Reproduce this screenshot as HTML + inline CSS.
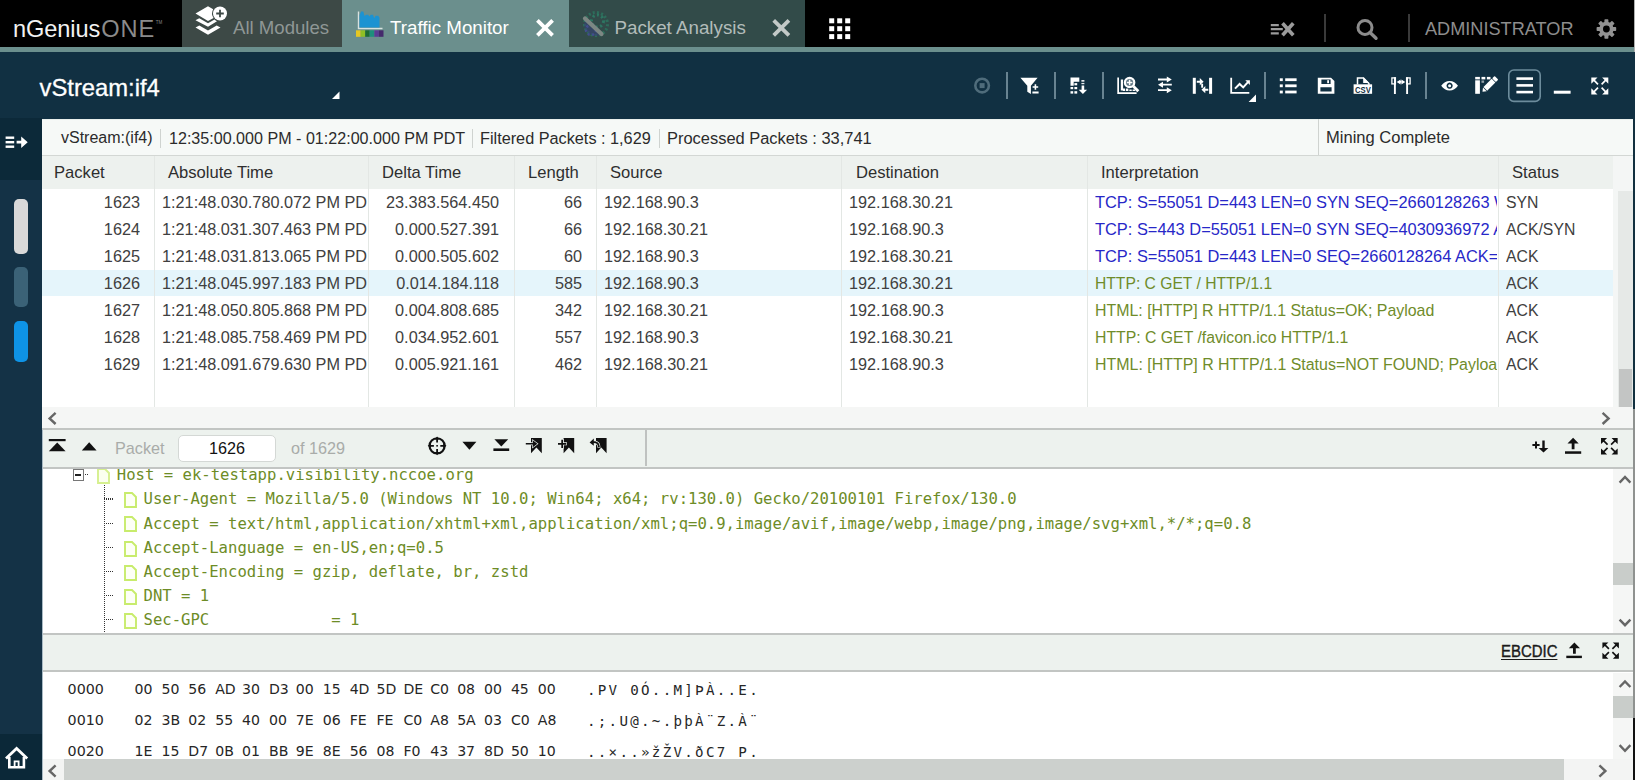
<!DOCTYPE html>
<html lang="en"><head><meta charset="utf-8"><title>nGeniusONE - Traffic Monitor</title>
<style>
*{box-sizing:border-box;margin:0;padding:0}
html,body{width:1635px;height:780px;overflow:hidden;background:#fff}
body{position:relative;font-family:"Liberation Sans",sans-serif;color:#333;font-size:16px}
div,span,i,svg,b{position:absolute;display:block}
i{font-style:normal}
#top{left:0;top:0;width:1635px;height:47px;background:#000}
#strip{left:0;top:47px;width:1635px;height:5px;background:#6b8f8d}
#bar{left:0;top:52px;width:1635px;height:67.400px;background:#113042}
#side{left:0;top:118px;width:42px;height:662px;background:#143246}
#sidetop{left:0;top:0;width:42px;height:62px;background:#0c2939}
#sidebot{left:0;top:616.400px;width:42px;height:46px;background:#0b2838}
.pill{left:14px;width:14px;border-radius:5px}
#redge{left:1633px;top:118px;width:2px;height:662px;background:#12303f}
.logo{left:13px;top:14.300px;font-size:23.6px;line-height:30px;color:#f2f2f2;white-space:nowrap;letter-spacing:-0.1px}
.logo span{position:static;display:inline;color:#8b8b8b;letter-spacing:1px;margin-left:1px}
.logo sup{font-size:4.500px;color:#888;vertical-align:top;position:relative;top:-6.500px;left:0.500px;letter-spacing:0}
.tab{top:0;height:47px}
.tab .lbl{top:15.200px;font-size:18.6px;line-height:26px;white-space:nowrap}
#t1{left:182px;width:160px;background:#3d4946}
#t2{left:342px;width:227px;background:#6b8f8d}
#t3{left:569px;width:236px;background:#324b49}
.adm{left:1425px;top:15.500px;font-size:18.150px;line-height:26px;color:#8d8d8d;white-space:nowrap}
.tsep{top:14px;width:2px;height:28px;background:#3a3a3a}
.title{left:39.500px;top:19.800px;font-size:23.8px;line-height:32px;color:#fff;white-space:nowrap;-webkit-text-stroke:0.3px #fff}
.bsep{top:20px;width:2px;height:27px;background:#688391}
.ico{overflow:visible}
#info{left:42px;top:119.400px;width:1591px;height:36.600px;background:#f6f9f7;border-bottom:1px solid #d3d7d4;border-top:1px solid #e9efec}
#info span{top:-1.400px;line-height:38px;font-size:16px;color:#2b2b2b;white-space:nowrap}
#info i{top:8.500px;width:1px;height:19px;background:#cfd3d0}
#tbl{left:42px;top:118px;width:1591px;height:289px;overflow:hidden}
.thead{left:0;top:38px;width:1571px;height:33px;background:#edf1ee}
.th{top:0;line-height:33px;font-size:16.6px;color:#2e2e2e;white-space:nowrap}
.tr{left:0;width:1571px;height:27px}
.tr.sel{background:#e5f5fb;height:26px}
.td{top:0;height:27px;line-height:27px;font-size:16.250px;color:#404040;white-space:nowrap;overflow:hidden}
.td.r{text-align:right}
.td.b{color:#2727c8}
.td.g{color:#6f8c2a}
.vsep{top:38px;width:1px;height:251px;background:#e3e7e4}
#ptb{left:42px;top:428px;width:1591px;height:40.500px;background:#edf2ee;border-top:2px solid #c2c5c3;border-bottom:2px solid #c2c5c3}
#tree{left:42px;top:468px;width:1591px;height:165px;overflow:hidden;background:#fff}
.tn{font-family:"DejaVu Sans Mono","Liberation Mono",monospace;font-size:15.6px;line-height:20px;height:20px;color:#6d8c26;white-space:nowrap}
.doc{overflow:visible}
.hdot{width:10px;height:1.300px;background:repeating-linear-gradient(90deg,#333 0 1px,transparent 1px 2px)}
.vdot{left:62px;top:17px;width:1.300px;height:150px;background:repeating-linear-gradient(180deg,#333 0 1px,transparent 1px 2px)}
.exp{left:30.500px;top:1.200px;width:11.500px;height:11.500px;border:1.200px solid #777;background:#fff}
.exp:after{content:"";position:absolute;left:1.500px;top:3.800px;width:6px;height:1.600px;background:#222}
#htb{left:42px;top:633px;width:1591px;height:39px;background:#edf2ee;border-top:2px solid #c2c5c3;border-bottom:2px solid #c2c5c3}
#hex{left:42px;top:672px;width:1591px;height:88px;overflow:hidden;background:#fff}
.hx{left:0;height:20px;width:1500px;font-family:"DejaVu Sans Mono","Liberation Mono",monospace;color:#262626;white-space:nowrap}
.hx span{top:0;line-height:20px}
.ho{left:25.600px;font-size:14.250px;font-family:"DejaVu Sans","Liberation Sans",sans-serif}
.hh{left:92.600px;font-size:14.100px;font-family:"DejaVu Sans","Liberation Sans",sans-serif;width:440px;height:20px}
.hh b{top:0;font-weight:normal;line-height:20px}
.ha{left:545px;top:0.600px !important;font-size:14.2px;letter-spacing:2.27px}
.sb{background:#f0f1f0}
.thumb{background:#c9cdca}

</style></head><body>
<div id="top">
  <div class="logo">nGenius<span>ONE</span><sup>TM</sup></div>
  <div class="tab" id="t1"><span class="lbl" style="left:51px;color:#8f9795">All Modules</span></div>
  <div class="tab" id="t2"><span class="lbl" style="left:48px;color:#fff;font-size:18.750px">Traffic Monitor</span></div>
  <div class="tab" id="t3"><span class="lbl" style="left:45.500px;color:#b3bcba;font-size:18.75px">Packet Analysis</span></div>
  <i class="tsep" style="left:1324px"></i><i class="tsep" style="left:1408px"></i>
  <div class="adm">ADMINISTRATOR</div>
</div>
<div id="strip"></div>
<div id="bar">
  <div class="title">vStream:if4</div>
  <i class="bsep" style="left:1006px"></i><i class="bsep" style="left:1054px"></i><i class="bsep" style="left:1102px"></i><i class="bsep" style="left:1264px"></i><i class="bsep" style="left:1425px"></i>
</div>
<div id="side">
  <div id="sidetop"></div>
  <i class="pill" style="top:81px;height:55px;background:#d9d9d9"></i>
  <i class="pill" style="top:149px;height:40px;background:#3b6277"></i>
  <i class="pill" style="top:202.500px;height:41px;background:#0e93e6"></i>
  <div id="sidebot"></div>
</div>
<div id="info">
  <span style="left:19px">vStream:(if4)</span><i style="left:118px"></i>
  <span style="left:127px;font-size:16.1px">12:35:00.000 PM - 01:22:00.000 PM PDT</span><i style="left:430px"></i>
  <span style="left:438px;font-size:16.25px">Filtered Packets : 1,629</span><i style="left:617px"></i>
  <span style="left:625px;font-size:16.45px">Processed Packets : 33,741</span><i style="left:1276px;top:-1px;height:36px"></i>
  <span style="left:1284px;font-size:16.55px">Mining Complete</span>
</div>
<div id="tbl">
<div class="thead"><span class="th" style="left:12px">Packet</span><span class="th" style="left:126px">Absolute Time</span><span class="th" style="left:340px">Delta Time</span><span class="th" style="left:486px">Length</span><span class="th" style="left:568px">Source</span><span class="th" style="left:814px">Destination</span><span class="th" style="left:1059px">Interpretation</span><span class="th" style="left:1470px">Status</span></div>
<div class="tr" style="top:71px"><span class="td r" style="left:0px;width:98px">1623</span><span class="td" style="left:120px;width:205px">1:21:48.030.780.072 PM PD</span><span class="td r" style="left:326px;width:131px">23.383.564.450</span><span class="td r" style="left:472px;width:68px">66</span><span class="td" style="left:562px;width:236px">192.168.90.3</span><span class="td" style="left:807px;width:237px">192.168.30.21</span><span class="td b" style="left:1053px;width:402px;font-size:16.4px">TCP: S=55051 D=443 LEN=0 SYN SEQ=2660128263 WIN=64240</span><span class="td" style="left:1464px;width:105px;font-size:15.8px">SYN</span></div>
<div class="tr" style="top:98px"><span class="td r" style="left:0px;width:98px">1624</span><span class="td" style="left:120px;width:205px">1:21:48.031.307.463 PM PD</span><span class="td r" style="left:326px;width:131px">0.000.527.391</span><span class="td r" style="left:472px;width:68px">66</span><span class="td" style="left:562px;width:236px">192.168.30.21</span><span class="td" style="left:807px;width:237px">192.168.90.3</span><span class="td b" style="left:1053px;width:402px;font-size:16.4px">TCP: S=443 D=55051 LEN=0 SYN SEQ=4030936972 ACK=2660128264</span><span class="td" style="left:1464px;width:105px;font-size:15.8px">ACK/SYN</span></div>
<div class="tr" style="top:125px"><span class="td r" style="left:0px;width:98px">1625</span><span class="td" style="left:120px;width:205px">1:21:48.031.813.065 PM PD</span><span class="td r" style="left:326px;width:131px">0.000.505.602</span><span class="td r" style="left:472px;width:68px">60</span><span class="td" style="left:562px;width:236px">192.168.90.3</span><span class="td" style="left:807px;width:237px">192.168.30.21</span><span class="td b" style="left:1053px;width:402px;font-size:16.4px">TCP: S=55051 D=443 LEN=0 SEQ=2660128264 ACK=4030936973</span><span class="td" style="left:1464px;width:105px;font-size:15.8px">ACK</span></div>
<div class="tr sel" style="top:152px"><span class="td r" style="left:0px;width:98px">1626</span><span class="td" style="left:120px;width:205px">1:21:48.045.997.183 PM PD</span><span class="td r" style="left:326px;width:131px">0.014.184.118</span><span class="td r" style="left:472px;width:68px">585</span><span class="td" style="left:562px;width:236px">192.168.90.3</span><span class="td" style="left:807px;width:237px">192.168.30.21</span><span class="td g" style="left:1053px;width:402px;font-size:15.67px">HTTP: C GET / HTTP/1.1</span><span class="td" style="left:1464px;width:105px;font-size:15.8px">ACK</span></div>
<div class="tr" style="top:179px"><span class="td r" style="left:0px;width:98px">1627</span><span class="td" style="left:120px;width:205px">1:21:48.050.805.868 PM PD</span><span class="td r" style="left:326px;width:131px">0.004.808.685</span><span class="td r" style="left:472px;width:68px">342</span><span class="td" style="left:562px;width:236px">192.168.30.21</span><span class="td" style="left:807px;width:237px">192.168.90.3</span><span class="td g" style="left:1053px;width:402px;font-size:15.93px">HTML: [HTTP] R HTTP/1.1 Status=OK; Payload</span><span class="td" style="left:1464px;width:105px;font-size:15.8px">ACK</span></div>
<div class="tr" style="top:206px"><span class="td r" style="left:0px;width:98px">1628</span><span class="td" style="left:120px;width:205px">1:21:48.085.758.469 PM PD</span><span class="td r" style="left:326px;width:131px">0.034.952.601</span><span class="td r" style="left:472px;width:68px">557</span><span class="td" style="left:562px;width:236px">192.168.90.3</span><span class="td" style="left:807px;width:237px">192.168.30.21</span><span class="td g" style="left:1053px;width:402px;font-size:15.8px">HTTP: C GET /favicon.ico HTTP/1.1</span><span class="td" style="left:1464px;width:105px;font-size:15.8px">ACK</span></div>
<div class="tr" style="top:233px"><span class="td r" style="left:0px;width:98px">1629</span><span class="td" style="left:120px;width:205px">1:21:48.091.679.630 PM PD</span><span class="td r" style="left:326px;width:131px">0.005.921.161</span><span class="td r" style="left:472px;width:68px">462</span><span class="td" style="left:562px;width:236px">192.168.30.21</span><span class="td" style="left:807px;width:237px">192.168.90.3</span><span class="td g" style="left:1053px;width:402px;font-size:15.95px">HTML: [HTTP] R HTTP/1.1 Status=NOT FOUND; Payload</span><span class="td" style="left:1464px;width:105px;font-size:15.8px">ACK</span></div>
<i class="vsep" style="left:112px"></i><i class="vsep" style="left:326px"></i><i class="vsep" style="left:472px"></i><i class="vsep" style="left:554px"></i><i class="vsep" style="left:799px"></i><i class="vsep" style="left:1045px"></i><i class="vsep" style="left:1456px"></i>
</div>
<div id="tree">
<div class="tn" style="top:-2.7px;left:74.8px">Host = ek-testapp.visibility.nccoe.org</div>
<svg class="doc" style="top:0.0px;left:55px" width="13" height="16" viewBox="0 0 13 16"><path d="M1 1h7l4 4v10H1z" fill="#fbffef" stroke="#d6f08e" stroke-width="1.9"/></svg>
<div class="tn" style="top:21.4px;left:101.5px">User-Agent = Mozilla/5.0 (Windows NT 10.0; Win64; x64; rv:130.0) Gecko/20100101 Firefox/130.0</div>
<svg class="doc" style="top:24.1px;left:82px" width="13" height="16" viewBox="0 0 13 16"><path d="M1 1h7l4 4v10H1z" fill="#fdfff6" stroke="#c8ec6c" stroke-width="1.9"/></svg>
<i class="hdot" style="top:30.4px;left:62px"></i>
<div class="tn" style="top:45.6px;left:101.5px">Accept = text/html,application/xhtml+xml,application/xml;q=0.9,image/avif,image/webp,image/png,image/svg+xml,*/*;q=0.8</div>
<svg class="doc" style="top:48.3px;left:82px" width="13" height="16" viewBox="0 0 13 16"><path d="M1 1h7l4 4v10H1z" fill="#fdfff6" stroke="#c8ec6c" stroke-width="1.9"/></svg>
<i class="hdot" style="top:54.6px;left:62px"></i>
<div class="tn" style="top:69.8px;left:101.5px">Accept-Language = en-US,en;q=0.5</div>
<svg class="doc" style="top:72.5px;left:82px" width="13" height="16" viewBox="0 0 13 16"><path d="M1 1h7l4 4v10H1z" fill="#fdfff6" stroke="#c8ec6c" stroke-width="1.9"/></svg>
<i class="hdot" style="top:78.8px;left:62px"></i>
<div class="tn" style="top:93.9px;left:101.5px">Accept-Encoding = gzip, deflate, br, zstd</div>
<svg class="doc" style="top:96.6px;left:82px" width="13" height="16" viewBox="0 0 13 16"><path d="M1 1h7l4 4v10H1z" fill="#fdfff6" stroke="#c8ec6c" stroke-width="1.9"/></svg>
<i class="hdot" style="top:102.9px;left:62px"></i>
<div class="tn" style="top:118.0px;left:101.5px">DNT = 1</div>
<svg class="doc" style="top:120.7px;left:82px" width="13" height="16" viewBox="0 0 13 16"><path d="M1 1h7l4 4v10H1z" fill="#fdfff6" stroke="#c8ec6c" stroke-width="1.9"/></svg>
<i class="hdot" style="top:127.0px;left:62px"></i>
<div class="tn" style="top:142.2px;left:101.5px">Sec-GPC             = 1</div>
<svg class="doc" style="top:144.9px;left:82px" width="13" height="16" viewBox="0 0 13 16"><path d="M1 1h7l4 4v10H1z" fill="#fdfff6" stroke="#c8ec6c" stroke-width="1.9"/></svg>
<i class="hdot" style="top:151.2px;left:62px"></i>
<i class="vdot"></i>
<span class="exp"></span><i class="hdot" style="top:6px;left:43px;width:4px"></i>
</div>
<div id="hex">
<div class="hx" style="top:7.2px"><span class="ho">0000</span><span class="hh"><b style="left:0.00px">00</b><b style="left:26.88px">50</b><b style="left:53.76px">56</b><b style="left:80.64px">AD</b><b style="left:107.52px">30</b><b style="left:134.40px">D3</b><b style="left:161.28px">00</b><b style="left:188.16px">15</b><b style="left:215.04px">4D</b><b style="left:241.92px">5D</b><b style="left:268.80px">DE</b><b style="left:295.68px">C0</b><b style="left:322.56px">08</b><b style="left:349.44px">00</b><b style="left:376.32px">45</b><b style="left:403.20px">00</b></span><span class="ha">.PV 0Ó..M]ÞÀ..E.</span></div>
<div class="hx" style="top:38.2px"><span class="ho">0010</span><span class="hh"><b style="left:0.00px">02</b><b style="left:26.88px">3B</b><b style="left:53.76px">02</b><b style="left:80.64px">55</b><b style="left:107.52px">40</b><b style="left:134.40px">00</b><b style="left:161.28px">7E</b><b style="left:188.16px">06</b><b style="left:215.04px">FE</b><b style="left:241.92px">FE</b><b style="left:268.80px">C0</b><b style="left:295.68px">A8</b><b style="left:322.56px">5A</b><b style="left:349.44px">03</b><b style="left:376.32px">C0</b><b style="left:403.20px">A8</b></span><span class="ha">.;.U@.~.þþÀ¨Z.À¨</span></div>
<div class="hx" style="top:69.2px"><span class="ho">0020</span><span class="hh"><b style="left:0.00px">1E</b><b style="left:26.88px">15</b><b style="left:53.76px">D7</b><b style="left:80.64px">0B</b><b style="left:107.52px">01</b><b style="left:134.40px">BB</b><b style="left:161.28px">9E</b><b style="left:188.16px">8E</b><b style="left:215.04px">56</b><b style="left:241.92px">08</b><b style="left:268.80px">F0</b><b style="left:295.68px">43</b><b style="left:322.56px">37</b><b style="left:349.44px">8D</b><b style="left:376.32px">50</b><b style="left:403.20px">10</b></span><span class="ha">..×..»žŽV.ðC7 P.</span></div>
</div>
<!-- scrollbars -->
<div class="sb" style="left:1613px;top:156px;width:20px;height:251px;background:#f4f6f5"></div>
<div class="sb" style="left:1618px;top:191px;width:15px;height:216px;background:#e6e9e7"></div>
<div class="thumb" style="left:1619px;top:369px;width:13px;height:38px;background:#c3c5c4"></div>
<div class="sb" style="left:42px;top:407px;width:1591px;height:21px;background:#f5f6f5"></div>
<div id="ptb">
  <span style="left:73px;top:0;line-height:36px;font-size:16.2px;color:#a9aca9">Packet</span>
  <div style="left:136px;top:4.500px;width:98px;height:27px;background:#fff;border:1px solid #d4d8d5;border-radius:5px"></div>
  <span style="left:136px;top:0;width:98px;text-align:center;line-height:37px;font-size:16.2px;color:#111;">1626</span>
  <span style="left:249px;top:0;line-height:36px;font-size:16.2px;color:#a9aca9">of 1629</span>
  <i style="left:603px;top:0;width:2px;height:36px;background:#bfc2c0"></i>
</div>
<div class="sb" style="left:1613px;top:469px;width:20px;height:164px;background:#f5f6f5"></div>
<div class="thumb" style="left:1613px;top:563px;width:20px;height:22px"></div>
<div id="htb">
  <span style="left:1458.500px;top:-1px;line-height:35px;font-size:16.6px;color:#1a1a1a;text-decoration:underline;text-underline-offset:1.500px;text-decoration-thickness:1.300px;-webkit-text-stroke:0.4px #1a1a1a;transform:scaleX(0.9);transform-origin:0 0">EBCDIC</span>
</div>
<div class="sb" style="left:1613px;top:673px;width:20px;height:87px;background:#f5f6f5"></div>
<div class="thumb" style="left:1613px;top:696px;width:20px;height:22px"></div>
<div class="sb" style="left:42px;top:759px;width:1591px;height:21px;background:#f3f4f3"></div>
<div class="thumb" style="left:64px;top:759px;width:1500px;height:21px;background:#ccd0cd"></div>
<div id="redge"></div>
<div style="left:1633px;top:409px;width:2px;height:310px;background:#8f9290"></div>
<div style="left:1633px;top:718px;width:2px;height:62px;background:#111"></div>
<div style="left:42px;top:430px;width:1px;height:350px;background:#a9bac4"></div>
<div style="left:1633.500px;top:0;width:1.500px;height:52px;background:#aeb0af"></div>
<svg id="ov" style="left:0;top:0" width="1635" height="780" viewBox="0 0 1635 780">
<!-- ===== top bar icons ===== -->
<g fill="#fff">
  <!-- layers + plus (All Modules) -->
  <path d="M195.5 13.5 L208 6.3 L213.2 9.3 A8 8 0 0 0 213.6 18 L208 21 Z"/>
  <path d="M195.5 20.3 L199.3 18.2 L208 23.2 L214.5 19.5 A8 8 0 0 0 217 21.2 L208 26.8 Z" />
  <path d="M195.5 27.6 L199.3 25.4 L208 30.4 L216.7 25.4 L220.5 27.6 L208 34.8 Z"/>
  <circle cx="220" cy="13.5" r="7"/>
</g>
<path d="M216.2 13.5h7.6M220 9.7v7.6" stroke="#3d4946" stroke-width="1.8" fill="none"/>
<!-- traffic monitor icon -->
<path d="M358.5 11.5V28.5H382.5" stroke="#d8e2e0" stroke-width="1.4" fill="none"/>
<path d="M359.6 27.6V15l1.5-3.5h2.2l1.2 4.5 1.6-1.2h2.2l1 1.7 1.5-1.7h2.2l1.2 3.5 1.4-2.5h2.6l1.3 2v9.8z" fill="#1c93d2"/>
<g>
 <rect x="356" y="30.3" width="4.7" height="6.5" fill="#e6c722"/>
 <rect x="360.7" y="30.3" width="4.5" height="6.5" fill="#8fbf25"/>
 <rect x="365.2" y="30.3" width="4.5" height="6.5" fill="#1d6b33"/>
 <rect x="369.7" y="30.3" width="4.6" height="6.5" fill="#1d8f7c"/>
 <rect x="374.3" y="30.3" width="4.6" height="6.5" fill="#5a3c93"/>
 <rect x="378.9" y="30.3" width="4.6" height="6.5" fill="#452a6c"/>
</g>
<!-- close X (active) -->
<path d="M537.400 20.300L552.600 35.300M552.600 20.300L537.400 35.300" stroke="#fff" stroke-width="3.800" fill="none"/>
<!-- packet analysis icon -->
<g opacity="0.55">
 <circle cx="596" cy="24" r="11.5" fill="none" stroke="#2a8a6a" stroke-width="3" stroke-dasharray="2 2.2" transform="rotate(-20 596 24)"/>
 <circle cx="597.5" cy="21" r="6" fill="none" stroke="#2a9a78" stroke-width="3" stroke-dasharray="2 2.5"/>
 <path d="M584 24a12 12 0 0 0 16 11.300L586 19z" fill="#3a3a9a" opacity="0.600"/>
 <circle cx="591" cy="30" r="5" fill="none" stroke="#5050c8" stroke-width="2.5" stroke-dasharray="2 2.5"/>
 <path d="M585 18.5L601.5 34" stroke="#b9b9b4" stroke-width="4.2" stroke-linecap="round"/>
</g>
<!-- close X (inactive) -->
<path d="M773.700 20.300L788.900 35.300M788.900 20.300L773.700 35.300" stroke="#c3c9c7" stroke-width="3.800" fill="none"/>
<!-- grid 3x3 -->
<g fill="#fff">
 <rect x="829.2" y="18.3" width="5" height="5"/><rect x="837.2" y="18.3" width="5" height="5"/><rect x="845.2" y="18.3" width="5" height="5"/>
 <rect x="829.2" y="26.2" width="5" height="5"/><rect x="837.2" y="26.2" width="5" height="5"/><rect x="845.2" y="26.2" width="5" height="5"/>
 <rect x="829.2" y="34.1" width="5" height="5"/><rect x="837.2" y="34.1" width="5" height="5"/><rect x="845.2" y="34.1" width="5" height="5"/>
</g>
<!-- =x -->
<g stroke="#9b9b9b" fill="none">
 <path d="M1270.8 25.2h8M1270.8 29.2h12M1270.8 33.3h8" stroke-width="2.2"/>
 <path d="M1282.5 23.2L1293.3 35.3M1293.3 23.2L1282.5 35.3" stroke-width="3.6"/>
</g>
<!-- search -->
<circle cx="1365" cy="27.4" r="7" stroke="#8c8c8c" stroke-width="3" fill="none"/>
<path d="M1370 32.6L1376 38.3" stroke="#8c8c8c" stroke-width="3.4" stroke-linecap="round"/>
<!-- gear -->
<g transform="translate(1606.4 29)">
 <g fill="#929292">
  <rect x="-2" y="-9.8" width="4" height="19.6" rx="0.8"/>
  <rect x="-2" y="-9.8" width="4" height="19.6" rx="0.8" transform="rotate(45)"/>
  <rect x="-2" y="-9.8" width="4" height="19.6" rx="0.8" transform="rotate(90)"/>
  <rect x="-2" y="-9.8" width="4" height="19.6" rx="0.8" transform="rotate(135)"/>
  <circle r="7.2"/>
 </g>
 <circle r="3.4" fill="#000"/>
</g>
<!-- title dropdown triangle -->
<path d="M339.5 91.5V99H332z" fill="#fff"/>

<!-- ===== navy toolbar icons ===== -->
<!-- stop (disabled) -->
<circle cx="982.1" cy="85.6" r="6.8" stroke="#4f6c7b" stroke-width="2.6" fill="none"/>
<rect x="979.6" y="83.1" width="5" height="5" fill="#4f6c7b"/>
<g fill="#fff">
<!-- filter +- -->
 <path d="M1020.4 77.7h17.2l-6.7 8v8.2l-3.6-2.2v-6z"/>
 <path d="M1032.6 86.3h2v-2h1.6v2h2v1.5h-2v2h-1.6v-2h-2zM1032.4 91.6h6.2v1.9h-6.2z" />
<!-- sort -->
 <path d="M1070.500 77.500h8.800v4.200h-5.600v4h-3.200z"/>
 <rect x="1074.400" y="83.100" width="2.800" height="2.200"/>
 <rect x="1070.500" y="87" width="2.700" height="2.200"/><rect x="1074.400" y="87" width="2.800" height="2.200"/>
 <rect x="1070.500" y="91.200" width="2.700" height="2.400"/><rect x="1074.400" y="91.200" width="2.800" height="2.400"/>
 <rect x="1081.400" y="80" width="3" height="1.700" opacity="0.900"/><rect x="1081.400" y="82.900" width="3" height="1.300" opacity="0.900"/>
 <path d="M1081.600 85.600h2.600v4.200h2.900l-4.200 4.100l-4.200-4.100h2.900z"/>
<!-- chart search -->
 <path d="M1117.300 77.500h1.700v14.800h17.600v1.600h-19.300zM1120.800 79.400h2.300v11.200h-2.300z"/>
 <path d="M1122.8 88.6h2.4v2.4h-2.4zM1126 88.6h2.4v2.4h-2.4zM1129.3 89.4h2.4v1.6h-2.4zM1132.6 89.4h2.6v1.6h-2.6z"/>
</g>
<circle cx="1129.600" cy="82.500" r="4.700" stroke="#fff" stroke-width="2.200" fill="#5d7482"/>
<path d="M1129.600 79.700v5.600M1126.800 82.500h5.600" stroke="#fff" stroke-width="1.500"/>
<path d="M1133.300 86.300L1138.300 91.300" stroke="#fff" stroke-width="2.800"/>
<!-- three arrows -->
<g stroke="#fff" stroke-width="1.8" fill="none">
 <path d="M1158 79.500h10M1161.800 84.700h10M1158 90.200h10"/>
</g>
<g fill="#fff">
 <path d="M1166.800 76.500l5 3l-5 3zM1163 81.700l-5 3l5 3zM1166.800 87.200l5 3l-5 3z"/>
<!-- |><| -->
 <rect x="1192.8" y="77.8" width="3" height="16"/><rect x="1209.1" y="77.8" width="3" height="16"/>
 <path d="M1196.8 80.7h3v-2.6l3.8 3.6l-3.8 3.6v-2.6h-3zM1208.3 88.7h-3v-2.6l-3.8 3.6l3.8 3.6v-2.6h3z"/>
 <path d="M1201.2 83.7h1.9v4h-1.9z"/>
</g>
<!-- line chart -->
<path d="M1231.2 77.8V92.8H1249.3" stroke="#fff" stroke-width="1.8" fill="none"/>
<path d="M1235 88.6l4.6-4.6l3.6 3.4l5-5.6" stroke="#fff" stroke-width="2" fill="none"/>
<path d="M1245.3 80.3h4.6v4.6z" fill="#fff"/>
<path d="M1256 94.6V102H1248.6z" fill="#fff"/>
<!-- list -->
<g fill="#fff">
 <rect x="1279.8" y="78.3" width="3" height="2.8"/><rect x="1285.2" y="78.3" width="11.4" height="2.8"/>
 <rect x="1279.8" y="84.4" width="3" height="2.8"/><rect x="1285.2" y="84.4" width="11.4" height="2.8"/>
 <rect x="1279.8" y="90.6" width="3" height="2.8"/><rect x="1285.2" y="90.6" width="11.4" height="2.8"/>
<!-- save -->
 <path fill-rule="evenodd" d="M1317.8 77.7h13.2l3.4 3.2v12.8h-16.6zM1321.4 79.4v4.6h9.2v-4.6zM1320.4 87.2v4.2h11.2v-4.2z"/>
 <rect x="1327.2" y="80.2" width="1.8" height="3"/>
<!-- csv -->
 <path d="M1353.600 84.300h18.500v9.500h-18.500z"/>
 <path d="M1363.200 77.300l5.800 5.800h-5.800z"/>
</g>
<path d="M1357.500 84.600v-6.500h6l5.400 5.400v1.200" stroke="#fff" stroke-width="1.500" fill="none"/>
<rect x="1359.400" y="80.200" width="2.600" height="2.600" fill="#0c2433"/>
<text x="1355" y="92.700" font-family="Liberation Sans, sans-serif" font-weight="bold" font-size="9.200" fill="#12303f" textLength="15.800" lengthAdjust="spacingAndGlyphs">CSV</text>
<!-- antenna -->
<g stroke="#fff" fill="none">
 <path d="M1394.900 77.300V94M1407.100 77.300V94" stroke-width="1.900"/>
 <rect x="1391.900" y="77.900" width="3.500" height="6" stroke-width="1.300"/><rect x="1406.600" y="77.900" width="3.500" height="6" stroke-width="1.300"/>
</g>
<path d="M1396.700 81.900l3.900-2.500v5zM1405.300 81.900l-3.900-2.500v5zM1400.400 81h1.200v1.800h-1.200z" fill="#fff"/>
<!-- eye -->
<path fill-rule="evenodd" fill="#fff" d="M1441.2 85.7c2.2-3.2 5-4.8 8.4-4.8s6.2 1.6 8.4 4.8c-2.2 3.2-5 4.8-8.4 4.8s-6.200-1.6-8.400-4.800zM1449.600 82.600a3.100 3.100 0 1 0 0.010 0z"/>
<circle cx="1449.600" cy="85.700" r="1.500" fill="#fff"/>
<!-- edit table -->
<g fill="#fff">
 <rect x="1475.200" y="76.900" width="4.700" height="2.500"/><rect x="1475.200" y="80.300" width="4.700" height="13.500"/>
 <rect x="1481.500" y="76.900" width="3.800" height="2.500"/><rect x="1486.900" y="76.900" width="3.600" height="2.500"/>
 <rect x="1481.500" y="80.500" width="2.600" height="2.300" opacity="0.550"/>
 <g transform="translate(1482.500 91.700) rotate(-45)">
  <path d="M0 0L3.300-2.600V2.600z"/><rect x="4" y="-2.600" width="11.600" height="5.200"/><rect x="16.300" y="-2.600" width="3.400" height="5.200" rx="0.800"/>
 </g>
</g>
<!-- boxed hamburger -->
<rect x="1508.800" y="70" width="31.400" height="31.400" rx="5" stroke="#6d8c9c" stroke-width="1.600" fill="none"/>
<g fill="#fff">
 <rect x="1516.400" y="77.300" width="16.600" height="2.600"/><rect x="1516.400" y="84.100" width="16.600" height="2.600"/><rect x="1516.400" y="90.800" width="16.600" height="2.600"/>
 <rect x="1553.800" y="90.700" width="16.800" height="3"/>
</g>
<!-- fullscreen (white) -->
<g fill="#fff" transform="translate(1591.3 77.6)"><path d="M0.0 0.0L6.2 0.0L3.7 2.5L7.3 6.1L6.1 7.3L2.5 3.7L0.0 6.2z"/><path d="M17.0 0.0L10.8 0.0L13.3 2.5L9.7 6.1L10.9 7.3L14.5 3.7L17.0 6.2z"/><path d="M0.0 16.8L6.2 16.8L3.7 14.3L7.3 10.7L6.1 9.5L2.5 13.1L0.0 10.6z"/><path d="M17.0 16.8L10.8 16.8L13.3 14.3L9.7 10.7L10.9 9.5L14.5 13.1L17.0 10.6z"/></g>
<!-- sidebar menu arrow -->
<g fill="#fff">
 <rect x="5.600" y="136.500" width="8.600" height="2.400"/><rect x="5.600" y="141" width="8.600" height="2.400"/><rect x="5.600" y="145.500" width="8.600" height="2.400"/>
 <path d="M16.600 140.800h4.600v-4.300l6.500 5.700l-6.500 5.700v-4.300h-4.600z"/>
</g>
<!-- home -->
<path d="M6 758.500L16.600 748.500L27.200 758.500" stroke="#fff" stroke-width="2.800" fill="none" stroke-linejoin="miter"/>
<path d="M9.300 757v10.200h14.600V757" stroke="#fff" stroke-width="2.600" fill="none"/>
<path d="M14.600 767v-5.600h4v5.600" stroke="#fff" stroke-width="1.800" fill="none"/>
<!-- packet toolbar -->
<g fill="#111">
 <rect x="48.800" y="439" width="16.800" height="2.200"/><path d="M57.200 442.600l8.400 8.600h-16.800z"/>
 <path d="M89.200 442.200l7.400 8.200h-14.800z"/>
 <path d="M462.400 441.800h14l-7 8z"/>
 <path d="M494.400 439.200h13.800l-6.900 7.300z"/><rect x="493.400" y="448.400" width="15.800" height="2.600"/>
</g>
<circle cx="437.100" cy="445.800" r="7.600" stroke="#111" stroke-width="2.100" fill="none"/>
<path d="M437.100 436.400l2.400 3.200h-1.500v3h-1.800v-3h-1.500zM437.100 455.200l2.400-3.200h-1.500v-3h-1.800v3h-1.500zM427.700 445.800l3.200-2.400v1.500h3v1.800h-3v1.500zM446.500 445.800l-3.200-2.400v1.500h-3v1.800h3v1.500z" fill="#111"/>
<rect x="436.300" y="445" width="1.600" height="1.600" fill="#111"/>
<!-- bookmark arrows -->
<g fill="#111">
 <path d="M531 438h10.800v15.200l-5.400-5.600l-5.400 5.600z"/>
 <path d="M563.600 438h10.600v15.200l-5.300-5.600l-5.300 5.600z"/>
 <path d="M596 438h10.600v15.200l-5.300-5.600l-5.300 5.600z"/>
</g>
<g fill="#111" stroke="#edf2ee" stroke-width="1.300" paint-order="stroke">
 <path d="M525.800 443h7v-2.700l4.600 3.500l-4.600 3.500v-2.700h-7z"/>
 <path d="M558 443h3.300v-3.300h1.700v3.300h3.300v1.700h-3.300v3.300h-1.700v-3.300h-3.300z"/>
 <path d="M589.600 442.600l4.200-4v2.600c3.800 0 6 2.200 6 6h-1.700c0-2.700-1.500-4.200-4.300-4.200v2.800z"/>
</g>
<!-- right side of packet toolbar -->
<g fill="#111">
 <path d="M1532.400 444h2.600v-2.600h2v2.600h2.600v2h-2.600v2.600h-2v-2.600h-2.600z"/>
 <path d="M1542.300 440.600h2.400v7.400h3.700l-4.900 4.600l-4.900-4.600h3.700z"/>
 <path d="M1573.100 437.800l5.600 5.800h-4.200v5.600h-2.800v-5.600h-4.200z"/><rect x="1565" y="451.300" width="16.200" height="2.500"/>
 <path d="M1574.400 642.400l5.600 5.800h-4.200v5.600h-2.800v-5.600h-4.200z"/><rect x="1566.300" y="655.700" width="15.600" height="2.400"/>
</g>
<g fill="#111" transform="translate(1601 438) scale(0.98)"><path d="M0.0 0.0L6.2 0.0L3.7 2.5L7.3 6.1L6.1 7.3L2.5 3.7L0.0 6.2z"/><path d="M17.0 0.0L10.8 0.0L13.3 2.5L9.7 6.1L10.9 7.3L14.5 3.7L17.0 6.2z"/><path d="M0.0 16.8L6.2 16.8L3.7 14.3L7.3 10.7L6.1 9.5L2.5 13.1L0.0 10.6z"/><path d="M17.0 16.8L10.8 16.8L13.3 14.3L9.7 10.7L10.9 9.5L14.5 13.1L17.0 10.6z"/></g>
<g fill="#111" transform="translate(1602.4 642.400) scale(0.97)"><path d="M0.0 0.0L6.2 0.0L3.7 2.5L7.3 6.1L6.1 7.3L2.5 3.7L0.0 6.2z"/><path d="M17.0 0.0L10.8 0.0L13.3 2.5L9.7 6.1L10.9 7.3L14.5 3.7L17.0 6.2z"/><path d="M0.0 16.8L6.2 16.8L3.7 14.3L7.3 10.7L6.1 9.5L2.5 13.1L0.0 10.6z"/><path d="M17.0 16.8L10.8 16.8L13.3 14.3L9.7 10.7L10.9 9.5L14.5 13.1L17.0 10.6z"/></g>
<!-- scroll arrows -->
<g stroke="#666" stroke-width="2.400" fill="none">
 <path d="M55.600 412.800l-6 5.600l6 5.600"/>
 <path d="M1602.600 412.800l6 5.600l-6 5.600"/>
 <path d="M1619.600 482.600l5.400-5.600l5.400 5.600"/>
 <path d="M1619.600 619.600l5.400 5.600l5.400-5.600"/>
 <path d="M1619.600 687l5.400-5.600l5.400 5.600"/>
 <path d="M1619.600 745.200l5.400 5.600l5.400-5.600"/>
 <path d="M55.600 765.400l-6 5.600l6 5.600"/>
 <path d="M1599.400 765.400l6 5.600l-6 5.600"/>
</g>
</svg>
</body></html>
